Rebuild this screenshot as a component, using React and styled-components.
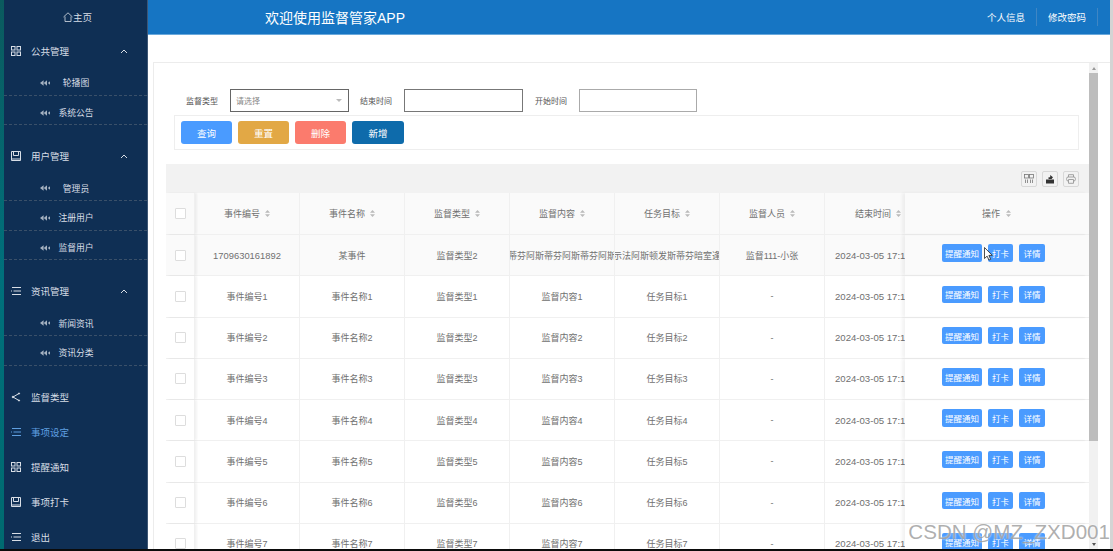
import React from "react";
import styled, { createGlobalStyle } from "styled-components";

const GlobalStyle = createGlobalStyle`
  html, body {
    margin: 0;
    background: #fff;
    font-family: "Liberation Sans", "Noto Sans CJK SC", sans-serif;
  }
  * { box-sizing: border-box; }
`;

const Page = styled.div`
  position: relative;
  width: 1113px;
  height: 551px;
  overflow: hidden;
`;

const Shell = styled.div`
  display: flex;
  height: 549px;
  overflow: hidden;
`;

const BottomBar = styled.div`
  height: 2px;
  background: #0b0b0b;
`;

const Strip = styled.div`
  width: 4px;
  background: linear-gradient(180deg, #0b5a5e, #00707c 50%, #006a70);
`;

const Side = styled.nav`
  width: 144px;
  background: #0f2f54;
  color: #d8dee6;
  border-right: 1px solid #3d5674;
`;

const HomeRow = styled.div`
  height: 34px;
  display: flex;
  align-items: center;
  justify-content: center;
  font-size: 9.5px;
  padding-left: 4px;
`;

const Head = styled.div`
  height: 32px;
  padding: 2px 19px 0 7px;
  display: flex;
  align-items: center;
  font-size: 9.5px;
  span { margin-left: 10px; flex: 1; }
`;

const Plain = styled.div`
  height: 35px;
  padding: 0 19px 0 7px;
  display: flex;
  align-items: center;
  font-size: 9.5px;
  color: ${(p) => (p.$active ? "#5f9fe0" : "#d8dee6")};
  span { margin-left: 10px; }
`;

const SubList = styled.div`
  margin-bottom: 14px;
`;

const Sub = styled.div`
  height: 29.7px;
  padding: 5px 0 0 36px;
  display: flex;
  align-items: center;
  border-bottom: 1px dashed #3a5069;
  font-size: 8.8px;
  svg { opacity: 0.75; }
  span { width: 42px; margin-left: 5px; text-align: center; white-space: nowrap; }
`;

const Main = styled.main`
  width: 962px;
  display: flex;
  flex-direction: column;
`;

const OuterBar = styled.div`
  width: 3px;
  background: #d4d4d4;
`;

const TopBar = styled.header`
  height: 35px;
  flex: none;
  background: #1675c3;
  border-bottom: 1px solid #6aa9dc;
  color: #fff;
  display: flex;
  align-items: center;
  padding: 0 12px 0 117px;
`;

const Title = styled.div`
  flex: 1;
  font-size: 14px;
`;

const TopLink = styled.div`
  height: 18px;
  width: 61px;
  display: flex;
  align-items: center;
  justify-content: center;
  font-size: 9.5px;
  border-right: 1px solid #3f86c4;
`;

const Content = styled.div`
  flex: 1;
  min-height: 0;
  padding: 27px 0 0 5px;
`;

const Panel = styled.div`
  height: 100%;
  display: flex;
  border-top: 1px solid #ececec;
  border-left: 1px solid #ececec;
  padding-right: 12px;
`;

const PanelBody = styled.div`
  flex: 1;
  min-width: 0;
  padding: 26px 0 0 12px;
`;

const Scrollbar = styled.div`
  width: 9px;
  flex: none;
  background: #f1f1f1;
  display: flex;
  flex-direction: column;
  align-items: center;
`;

const ScrollArrow = styled.div`
  height: 10px;
  flex: none;
  display: flex;
  align-items: center;
  justify-content: center;
  &::after {
    content: "";
    border-left: 2.5px solid transparent;
    border-right: 2.5px solid transparent;
    ${(p) => (p.$down ? "border-top: 3px solid #555;" : "border-bottom: 3px solid #999;")}
  }
`;

const ScrollThumb = styled.div`
  width: 100%;
  height: 368px;
  flex: none;
  background: #bdbdbd;
`;

const ScrollRest = styled.div`
  flex: 1;
`;

const FormRow = styled.div`
  height: 23px;
  margin-left: 20px;
  display: flex;
  align-items: center;
  gap: 12px;
`;

const Label = styled.label`
  font-size: 8px;
  color: #555;
  white-space: nowrap;
`;

const SelectBox = styled.div`
  width: 119px;
  height: 23px;
  margin-right: -1px;
  border: 1px solid #666;
  display: flex;
  align-items: center;
  justify-content: space-between;
  padding: 0 6px 0 5px;
  font-size: 8px;
  color: #888;
  &::after {
    content: "";
    border-left: 3px solid transparent;
    border-right: 3px solid transparent;
    border-top: 3px solid #bbb;
  }
`;

const TextInput = styled.input`
  width: ${(p) => p.$w}px;
  height: 23px;
  border: 1px solid ${(p) => p.$line};
  background: #fff;
  padding: 0;
`;

const ButtonBar = styled.div`
  width: 905px;
  height: 35px;
  margin: 3px 0 14px 8px;
  border: 1px solid #eee;
  padding: 5px 6px;
  display: flex;
  gap: 6px;
`;

const Action = styled.button`
  width: ${(p) => p.$w || 51}px;
  height: 23px;
  padding: 0;
  border: 0;
  border-radius: 3px;
  background: ${(p) => p.$bg};
  color: #fff;
  font: inherit;
  font-size: 9.5px;
`;

const TableTools = styled.div`
  height: 29px;
  background: #f2f2f2;
  display: flex;
  align-items: center;
  justify-content: flex-end;
  gap: 5px;
  padding-right: 10px;
`;

const ToolButton = styled.div`
  width: 16px;
  height: 16px;
  border: 1px solid #d8d8d8;
  border-radius: 2px;
  display: flex;
  align-items: center;
  justify-content: center;
`;

const Row = styled.div`
  display: grid;
  grid-template-columns: 29px repeat(6, 105px) 80px 183px;
  height: ${(p) => (p.$head ? 42 : 41.25)}px;
  background: ${(p) => (p.$tint ? "#fafafa" : "#fff")};
  border-bottom: 1px solid #f0f0f0;
  color: #707070;
  font-size: 9px;
`;

const Cell = styled.div`
  min-width: 0;
  overflow: hidden;
  display: flex;
  align-items: center;
  justify-content: center;
  gap: 5px;
  white-space: nowrap;
  border-right: 1px solid #f0f0f0;
`;

const CheckCell = styled(Cell)`
  box-shadow: 2px 0 2px rgba(0, 0, 0, 0.05);
`;

const Check = styled.div`
  width: 11px;
  height: 11px;
  background: #fff;
  border: 1px solid #ddd;
  border-radius: 1px;
`;

const NumberText = styled.span`
  font-size: 9.4px;
`;

const TimeCell = styled(Cell)`
  justify-content: flex-start;
  padding-left: ${(p) => (p.$head ? 30 : 10)}px;
  border-right: 0;
  font-size: ${(p) => (p.$head ? 9 : 9.6)}px;
`;

const FixedCell = styled(Cell)`
  box-shadow: -3px 0 3px rgba(0, 0, 0, 0.05);
  border-right: 0;
  gap: 6px;
`;

const OperateCell = styled(FixedCell)`
  padding: 0 6px 4px 0;
`;

const MiniButton = styled.button`
  width: ${(p) => p.$w}px;
  height: 17.5px;
  flex: none;
  padding: 0;
  border: 0;
  border-radius: 2px;
  background: #4a9bff;
  color: #fff;
  font: inherit;
  font-size: 8.5px;
`;

const Watermark = styled.div`
  position: absolute;
  right: 3px;
  bottom: 7px;
  font-size: 20.6px;
  color: rgba(140, 140, 140, 0.7);
  text-shadow: 0 0 2px #fff;
  white-space: nowrap;
`;

const Cursor = styled.svg`
  position: absolute;
  left: 984px;
  top: 247px;
`;

const GridIcon = () => (
  <svg width="10" height="10" viewBox="0 0 10 10" fill="none" stroke="currentColor" strokeWidth="1">
    <rect x="0.5" y="0.5" width="3.5" height="3.5" />
    <rect x="6" y="0.5" width="3.5" height="3.5" />
    <rect x="0.5" y="6" width="3.5" height="3.5" />
    <rect x="6" y="6" width="3.5" height="3.5" />
  </svg>
);

const BookIcon = () => (
  <svg width="10" height="10" viewBox="0 0 10 10" fill="none" stroke="currentColor" strokeWidth="1">
    <path d="M.5 9.5V.5h9v9z" />
    <path d="M2.5.5v4h5v-4" />
    <path d="M.5 8h9" />
  </svg>
);

const ListIcon = () => (
  <svg width="10" height="10" viewBox="0 0 10 10" fill="none" stroke="currentColor" strokeWidth="1">
    <path d="M1 1.5h9M2.5 5H10M1 8.5h9" />
    <path d="M0 5h1" />
  </svg>
);

const ShareIcon = () => (
  <svg width="10" height="10" viewBox="0 0 10 10" fill="currentColor" stroke="currentColor" strokeWidth="1">
    <path d="M8 1.5 2 5l6 3.5" fill="none" />
    <circle cx="2" cy="5" r=".8" />
    <circle cx="8" cy="1.5" r=".6" />
    <circle cx="8" cy="8.5" r=".6" />
  </svg>
);

const BackIcon = () => (
  <svg width="10" height="6" viewBox="0 0 10 6" fill="currentColor" style={{ flex: "none" }}>
    <path d="M3.6.3v5.4L0 3zM7 .3v5.4L3.8 3z" />
    <path d="M10 1.2v3.6L7.8 3z" />
  </svg>
);

const HomeIcon = () => (
  <svg width="10" height="10" viewBox="0 0 10 10" fill="none" stroke="currentColor" strokeWidth=".8">
    <path d="M.5 5 5 .8 9.5 5M2 4.5v5h6v-5" />
  </svg>
);

const Chevron = () => (
  <svg width="8" height="5" viewBox="0 0 8 5" fill="none" stroke="currentColor" strokeWidth="1">
    <path d="M1 4l3-3 3 3" />
  </svg>
);

const SortIcon = () => (
  <svg width="5" height="7" viewBox="0 0 5 7" fill="#bbb" style={{ flex: "none" }}>
    <path d="M2.5 0 5 2.8H0zM2.5 7 0 4.2h5z" />
  </svg>
);

const ColumnsIcon = () => (
  <svg width="10" height="9" viewBox="0 0 10 9" fill="none" stroke="#777" strokeWidth=".8">
    <rect x=".5" y=".5" width="4" height="3.5" />
    <rect x="5.5" y=".5" width="4" height="3.5" />
    <path d="M1.5 5.5V9M3.5 5.5V9M6.5 5.5V9M8.5 5.5V9" />
  </svg>
);

const ExportIcon = () => (
  <svg width="10" height="10" viewBox="0 0 10 10" fill="#333">
    <path d="M1 5.5h8v4H1z" />
    <path d="M3.5 5V3.2h1.7V1L8 3.2 6.6 5z" />
  </svg>
);

const PrintIcon = () => (
  <svg width="10" height="10" viewBox="0 0 10 10" fill="none" stroke="#999" strokeWidth=".9">
    <path d="M2.5 3V.7h5V3" />
    <rect x=".6" y="3" width="8.8" height="4" rx="1.5" />
    <path d="M2.5 5.5h5v3.8h-5z" fill="#f2f2f2" />
  </svg>
);

const sections = [
  { icon: <GridIcon />, title: "公共管理", subs: ["轮播图", "系统公告"] },
  { icon: <BookIcon />, title: "用户管理", subs: ["管理员", "注册用户", "监督用户"] },
  { icon: <ListIcon />, title: "资讯管理", subs: ["新闻资讯", "资讯分类"] },
];

const plainItems = [
  { icon: <ShareIcon />, title: "监督类型" },
  { icon: <ListIcon />, title: "事项设定", active: true },
  { icon: <GridIcon />, title: "提醒通知" },
  { icon: <BookIcon />, title: "事项打卡" },
  { icon: <ListIcon />, title: "退出" },
];

const columns = ["事件编号", "事件名称", "监督类型", "监督内容", "任务目标", "监督人员"];

const rows = [
  {
    id: <NumberText>1709630161892</NumberText>,
    name: "某事件",
    type: "监督类型2",
    content: "斯蒂芬阿斯蒂芬阿斯蒂芬阿斯蒂",
    target: "是示法阿斯顿发斯蒂芬暗室逢灯",
    person: "监督111-小张",
    time: "2024-03-05 17:16:21",
  },
  ...[1, 2, 3, 4, 5, 6, 7].map((n) => ({
    id: `事件编号${n}`,
    name: `事件名称${n}`,
    type: `监督类型${n}`,
    content: `监督内容${n}`,
    target: `任务目标${n}`,
    person: "-",
    time: "2024-03-05 17:13:20",
  })),
];

const Sidebar = () => (
  <Side>
    <HomeRow>
      <HomeIcon />
      主页
    </HomeRow>
    {sections.map((s) => (
      <div key={s.title}>
        <Head>
          {s.icon}
          <span>{s.title}</span>
          <Chevron />
        </Head>
        <SubList>
          {s.subs.map((t) => (
            <Sub key={t}>
              <BackIcon />
              <span>{t}</span>
            </Sub>
          ))}
        </SubList>
      </div>
    ))}
    {plainItems.map((item) => (
      <Plain key={item.title} $active={item.active}>
        {item.icon}
        <span>{item.title}</span>
      </Plain>
    ))}
  </Side>
);

const DataTable = () => (
  <div>
    <TableTools>
      <ToolButton><ColumnsIcon /></ToolButton>
      <ToolButton><ExportIcon /></ToolButton>
      <ToolButton><PrintIcon /></ToolButton>
    </TableTools>
    <Row $head $tint>
      <CheckCell><Check /></CheckCell>
      {columns.map((c) => (
        <Cell key={c}>
          {c}
          <SortIcon />
        </Cell>
      ))}
      <TimeCell $head>
        结束时间
        <SortIcon />
      </TimeCell>
      <FixedCell>
        操作
        <SortIcon />
      </FixedCell>
    </Row>
    {rows.map((r, i) => (
      <Row key={i} $tint={i === 0}>
        <CheckCell><Check /></CheckCell>
        <Cell>{r.id}</Cell>
        <Cell>{r.name}</Cell>
        <Cell>{r.type}</Cell>
        <Cell>{r.content}</Cell>
        <Cell>{r.target}</Cell>
        <Cell>{r.person}</Cell>
        <TimeCell>{r.time}</TimeCell>
        <OperateCell>
          <MiniButton $w={40}>提醒通知</MiniButton>
          <MiniButton $w={25}>打卡</MiniButton>
          <MiniButton $w={26}>详情</MiniButton>
        </OperateCell>
      </Row>
    ))}
  </div>
);

export default function App() {
  return (
    <Page>
      <GlobalStyle />
      <Shell>
        <Strip />
        <Sidebar />
        <Main>
          <TopBar>
            <Title>欢迎使用监督管家APP</Title>
            <TopLink>个人信息</TopLink>
            <TopLink>修改密码</TopLink>
          </TopBar>
          <Content>
            <Panel>
              <PanelBody>
                <FormRow>
                  <Label>监督类型</Label>
                  <SelectBox>请选择</SelectBox>
                  <Label>结束时间</Label>
                  <TextInput $w={119} $line="#777" />
                  <Label>开始时间</Label>
                  <TextInput $w={118} $line="#aaa" />
                </FormRow>
                <ButtonBar>
                  <Action $bg="#4a9bff">查询</Action>
                  <Action $bg="#e2a845">重置</Action>
                  <Action $bg="#fb7b6d">删除</Action>
                  <Action $bg="#0e6bab" $w={52}>新增</Action>
                </ButtonBar>
                <DataTable />
              </PanelBody>
              <Scrollbar>
                <ScrollArrow />
                <ScrollThumb />
                <ScrollRest />
                <ScrollArrow $down />
              </Scrollbar>
            </Panel>
          </Content>
        </Main>
        <OuterBar />
      </Shell>
      <BottomBar />
      <Cursor width="9" height="14" viewBox="0 0 9 14">
        <path d="M.5.5v11l2.6-2.4 1.8 4 1.8-.8-1.8-3.9h3.4z" fill="#fff" stroke="#222" strokeWidth=".8" />
      </Cursor>
      <Watermark>CSDN @MZ_ZXD001</Watermark>
    </Page>
  );
}
